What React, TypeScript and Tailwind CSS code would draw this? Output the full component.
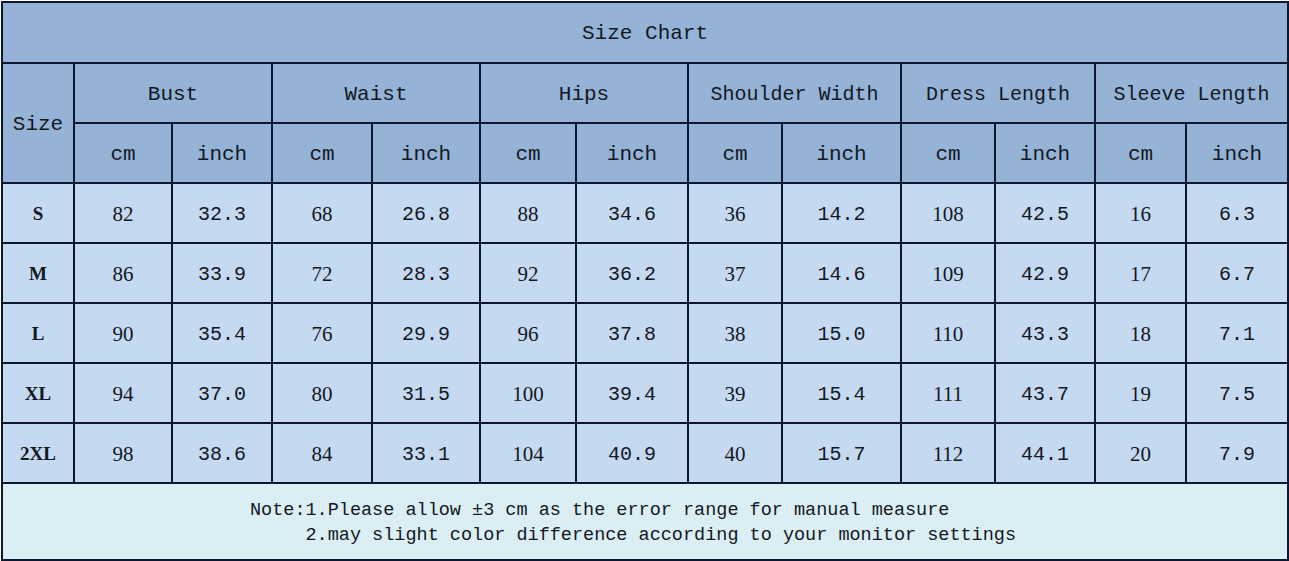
import React from 'react';

interface Row {
  size: string;
  values: [string, string][];
}

const groups = ['Bust', 'Waist', 'Hips', 'Shoulder Width', 'Dress Length', 'Sleeve Length'];

const rows: Row[] = [
  { size: 'S', values: [['82', '32.3'], ['68', '26.8'], ['88', '34.6'], ['36', '14.2'], ['108', '42.5'], ['16', '6.3']] },
  { size: 'M', values: [['86', '33.9'], ['72', '28.3'], ['92', '36.2'], ['37', '14.6'], ['109', '42.9'], ['17', '6.7']] },
  { size: 'L', values: [['90', '35.4'], ['76', '29.9'], ['96', '37.8'], ['38', '15.0'], ['110', '43.3'], ['18', '7.1']] },
  { size: 'XL', values: [['94', '37.0'], ['80', '31.5'], ['100', '39.4'], ['39', '15.4'], ['111', '43.7'], ['19', '7.5']] },
  { size: '2XL', values: [['98', '38.6'], ['84', '33.1'], ['104', '40.9'], ['40', '15.7'], ['112', '44.1'], ['20', '7.9']] },
];

const colWidths = [72, 98, 100, 100, 108, 96, 112, 94, 119, 94, 100, 91, 102];

const mono = "font-['Liberation_Mono',monospace]";
const serif = "font-['Liberation_Serif',serif]";
const cell = 'border-2 border-[#0e1730] text-center align-middle px-0 pb-0 pt-[3px]';

export default function App() {
  return (
    <div className="w-[1289px] h-[561px] bg-white pl-px pt-px text-[#131822]">
      <table className="table-fixed border-collapse w-[1287px]">
        <colgroup>
          {colWidths.map((w, i) => (
            <col key={i} style={{ width: w }} />
          ))}
        </colgroup>
        <tbody>
          <tr className="h-[61px] bg-[#95b3d7]">
            <td colSpan={13} className={`${cell} ${mono} text-[21px]`}>
              Size Chart
            </td>
          </tr>
          <tr className="h-[60px] bg-[#95b3d7]">
            <td rowSpan={2} className={`${cell} ${mono} text-[21px]`}>
              Size
            </td>
            {groups.map(g => (
              <td key={g} colSpan={2} className={`${cell} ${mono} ${g.length > 10 ? 'text-[20px]' : 'text-[21px]'}`}>
                {g}
              </td>
            ))}
          </tr>
          <tr className="h-[60px] bg-[#95b3d7]">
            {groups.map(g => (
              <React.Fragment key={g}>
                <td className={`${cell} ${mono} text-[21px]`}>cm</td>
                <td className={`${cell} ${mono} text-[21px]`}>inch</td>
              </React.Fragment>
            ))}
          </tr>
          {rows.map(r => (
            <tr key={r.size} className="h-[60px] bg-[#c5d9f1]">
              <td className={`${cell} ${serif} text-[19px] font-semibold`}>{r.size}</td>
              {r.values.map(([cm, inch], i) => (
                <React.Fragment key={i}>
                  <td className={`${cell} ${serif} text-[21px] font-medium`}>{cm}</td>
                  <td className={`${cell} ${mono} text-[20px]`}>{inch}</td>
                </React.Fragment>
              ))}
            </tr>
          ))}
          <tr className="h-[77px] bg-[#daeef3]">
            <td colSpan={13} className={`${cell} text-left`}>
              <div className={`${mono} text-[18.5px] leading-[25px] whitespace-pre pl-[247px]`}>
                {'Note:1.Please allow ±3 cm as the error range for manual measure\n     2.may slight color difference according to your monitor settings'}
              </div>
            </td>
          </tr>
        </tbody>
      </table>
    </div>
  );
}
